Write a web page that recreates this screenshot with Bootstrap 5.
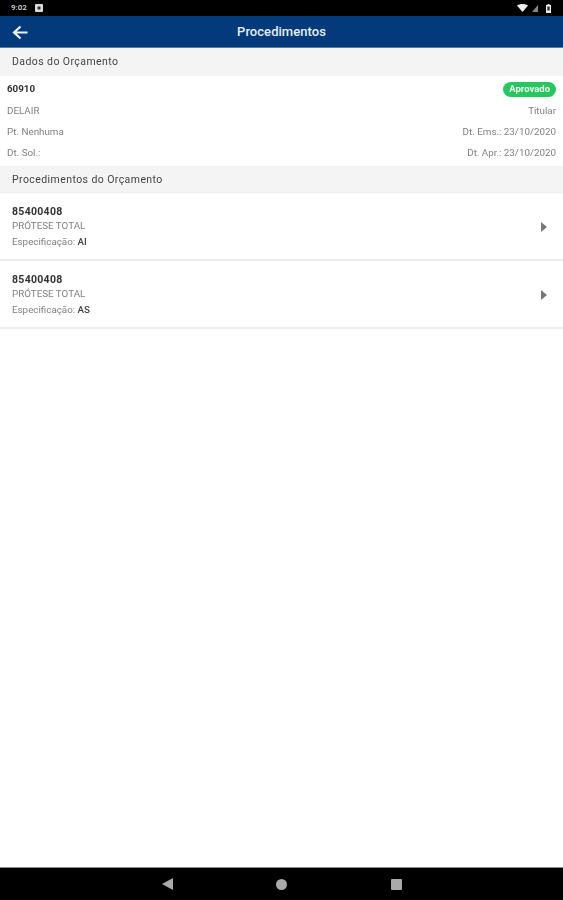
<!DOCTYPE html>
<html lang="pt-br">
<head>
    <meta charset="UTF-8">
    <meta name="viewport" content="width=device-width, initial-scale=1.0">
    <title>Procedimentos</title>

    <link href="https://cdn.jsdelivr.net/npm/bootstrap@5.3.0/dist/css/bootstrap.min.css" rel="stylesheet">

    <style>
        html, body {
            height: 100%;
        }

        body {
            font-family: Roboto, "Liberation Sans", sans-serif;
            background-color: #fff;
            font-size: 9.8px;
            color: #808080;
        }

        /* a referencia e um print ampliado, meio borrado */
        .tela {
            height: 900px;
            filter: blur(.4px);
        }

        .barra-status {
            height: 16px;
            background-color: #000;
            color: #ddd;
            font-size: 8px;
            font-weight: 500;
            padding: 0 12px 0 11px;
        }

        .barra-topo {
            height: 32px;
            padding-top: 1px;
            background-color: #023a7b;
            color: #e8edf3;
            border-bottom: 1px solid #5b7ba3;
        }

        .barra-topo .titulo {
            font-size: 13px;
            font-weight: 500;
            letter-spacing: .05px;
        }

        .btn-voltar {
            left: 12px;
            top: 9px;
            line-height: 0;
        }

        .secao {
            height: 28px;
            background-color: #f4f4f4;
            color: #444;
            font-size: 10.5px;
            padding-left: 12px;
            letter-spacing: .42px;
        }

        .secao-2 {
            height: 27px;
            padding-top: 1px;
            border-bottom: 1px solid #ececec;
        }

        .dados {
            height: 90px;
            padding: 4px 7px 1px 7px;
        }

        .linha-dado {
            height: 21px;
        }

        .linha-numero {
            height: 19px;
            margin-bottom: 2px;
        }

        .numero {
            color: #333;
            font-weight: 700;
        }

        .selo {
            background-color: #28c65f;
            color: #eafaf0;
            font-size: 9.5px;
            font-weight: 700;
            height: 15px;
            padding: 0 6px;
            border-radius: 8px;
        }

        .item-proc {
            height: 68px;
            padding: 12px 16px 0 12px;
            border-bottom: 2px solid #efefef;
            line-height: 15px;
        }

        .item-proc .codigo {
            color: #333;
            font-weight: 700;
            font-size: 10.5px;
            letter-spacing: .3px;
            line-height: 13px;
        }

        .item-proc .espec {
            margin-top: 1px;
        }

        .item-proc b {
            color: #444;
            font-weight: 500;
        }

        .seta {
            width: 0;
            height: 0;
            margin-top: 17px;
            border-left: 6px solid #777;
            border-top: 5px solid transparent;
            border-bottom: 5px solid transparent;
        }

        .barra-nav {
            height: 33px;
            background-color: #000;
            border-top: 1px solid #888;
        }

        .nav-icones {
            width: 240px;
        }
    </style>
</head>
<body>

<div class="tela d-flex flex-column">
    <div class="barra-status d-flex align-items-center justify-content-between">
        <div class="d-flex align-items-center gap-2">
            <span>9:02</span>
            <svg width="8" height="8" viewBox="0 0 8 8"><rect x="0" y="0" width="8" height="8" rx="1" fill="#ddd"/><rect x="2.5" y="2.5" width="3" height="3" fill="#333"/></svg>
        </div>
        <div class="d-flex align-items-center gap-1">
            <svg width="11" height="8" viewBox="0 0 11 8"><path d="M0 1.5C3 -.5 8 -.5 11 1.5L5.500 8Z" fill="#eee"/></svg>
            <svg width="6" height="7" viewBox="0 0 6 7"><path d="M6 0V7H0Z" fill="#888"/></svg>
            <svg class="ms-1" width="5" height="9" viewBox="0 0 5 9"><path d="M1.500 0H3.500V1H5V9H0V1H1.500Z" fill="#eee"/><rect x="1.300" y="2.500" width="2.400" height="4" fill="#333"/></svg>
        </div>
    </div>

    <div class="barra-topo position-relative d-flex align-items-center justify-content-center">
        <span class="btn-voltar position-absolute">
            <svg width="16" height="15" viewBox="0 0 16 15"><path d="M15.500 7.500H2.500M8.500 1.500L2 7.500L8.500 13.500" fill="none" stroke="#f2f5f8" stroke-width="2.200"/></svg>
        </span>
        <span class="titulo">Procedimentos</span>
    </div>

    <div class="secao d-flex align-items-center">Dados do Orçamento</div>

    <div class="dados">
        <div class="linha-dado linha-numero d-flex align-items-center justify-content-between">
            <span class="numero">60910</span>
            <span class="selo d-flex align-items-center">Aprovado</span>
        </div>
        <div class="linha-dado d-flex align-items-center justify-content-between">
            <span>DELAIR</span>
            <span>Titular</span>
        </div>
        <div class="linha-dado d-flex align-items-center justify-content-between">
            <span>Pt. Nenhuma</span>
            <span>Dt. Ems.: 23/10/2020</span>
        </div>
        <div class="linha-dado d-flex align-items-center justify-content-between">
            <span>Dt. Sol.:</span>
            <span>Dt. Apr.: 23/10/2020</span>
        </div>
    </div>

    <div class="secao secao-2 d-flex align-items-center">Procedimentos do Orçamento</div>

    <div class="item-proc d-flex justify-content-between">
        <div>
            <div class="codigo">85400408</div>
            <div>PRÓTESE TOTAL</div>
            <div class="espec">Especificação: <b>AI</b></div>
        </div>
        <div class="seta"></div>
    </div>
    <div class="item-proc d-flex justify-content-between">
        <div>
            <div class="codigo">85400408</div>
            <div>PRÓTESE TOTAL</div>
            <div class="espec">Especificação: <b>AS</b></div>
        </div>
        <div class="seta"></div>
    </div>

    <div class="flex-grow-1"></div>

    <div class="barra-nav d-flex justify-content-center align-items-center">
        <div class="nav-icones d-flex justify-content-between align-items-center">
            <svg width="11" height="12" viewBox="0 0 11 12"><path d="M11 0V12L0 6Z" fill="#aaa"/></svg>
            <svg width="11" height="11" viewBox="0 0 11 11"><circle cx="5.500" cy="5.500" r="5.500" fill="#aaa"/></svg>
            <svg width="11" height="11" viewBox="0 0 11 11"><rect width="11" height="11" rx="1" fill="#aaa"/></svg>
        </div>
    </div>
</div>

<script src="https://cdn.jsdelivr.net/npm/bootstrap@5.3.0/dist/js/bootstrap.bundle.min.js"></script>
</body>
</html>
